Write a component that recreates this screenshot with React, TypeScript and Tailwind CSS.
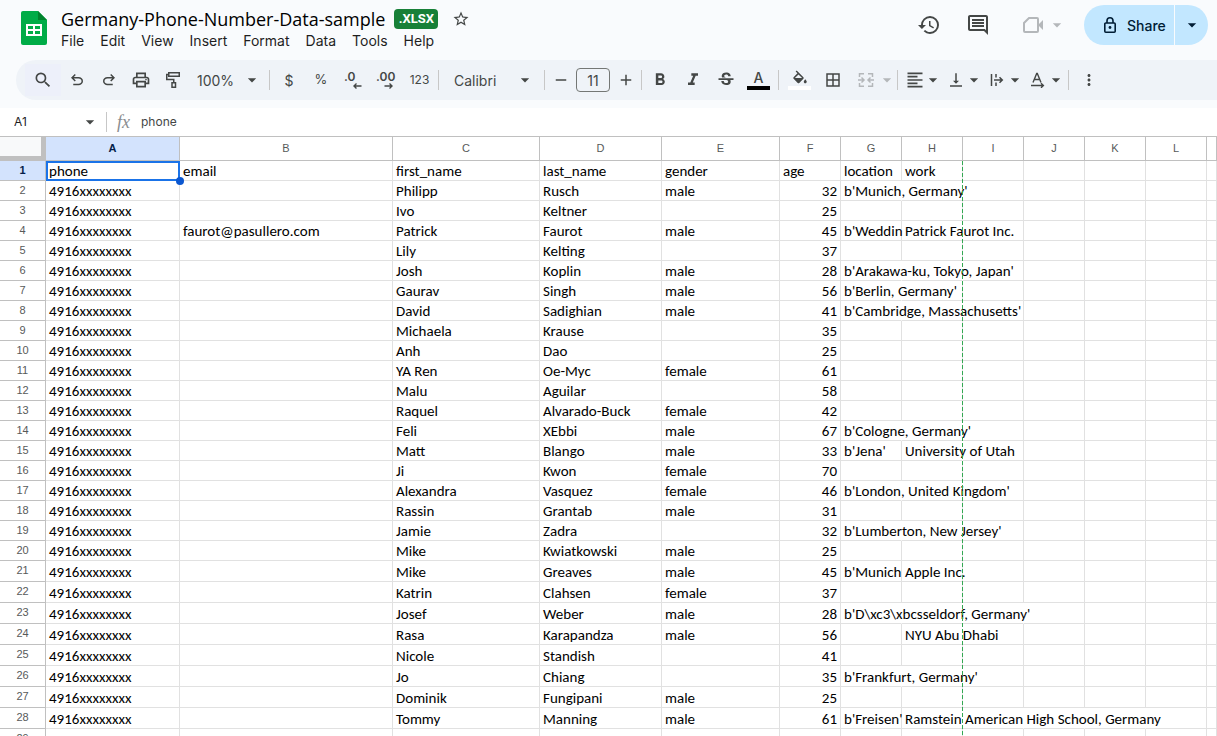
import { useState } from "react";
import { clsx } from "clsx";
import {
  MdAdd,
  MdArrowDropDown,
  MdBorderAll,
  MdFormatAlignLeft,
  MdFormatBold,
  MdFormatItalic,
  MdHistory,
  MdMoreVert,
  MdOutlineComment,
  MdOutlinePrint,
  MdRemove,
  MdSearch,
  MdStarBorder,
  MdStrikethroughS,
  MdVerticalAlignBottom,
} from "react-icons/md";

const menus = ["File", "Edit", "View", "Insert", "Format", "Data", "Tools", "Help"];

const columns = [
  { letter: "A", width: "w-[134px]" },
  { letter: "B", width: "w-[213px]" },
  { letter: "C", width: "w-[147px]" },
  { letter: "D", width: "w-[122px]" },
  { letter: "E", width: "w-[118px]" },
  { letter: "F", width: "w-[61px]" },
  { letter: "G", width: "w-[61px]" },
  { letter: "H", width: "w-[61px]" },
  { letter: "I", width: "w-[61px]" },
  { letter: "J", width: "w-[61px]" },
  { letter: "K", width: "w-[61px]" },
  { letter: "L", width: "w-[61px]" },
  { letter: "", width: "w-auto" },
];

const AGE = 5;
const LOCATION = 6;
const WORK = 7;

type Person = {
  email?: string;
  first: string;
  last: string;
  gender?: string;
  age: string;
  location?: string;
  work?: string;
  // index of the last column that a long value runs over
  spillTo?: number;
};

const people: Person[] = [
  { first: "Philipp", last: "Rusch", gender: "male", age: "32", location: "b'Munich, Germany'", spillTo: 8 },
  { first: "Ivo", last: "Keltner", age: "25" },
  { email: "faurot@pasullero.com", first: "Patrick", last: "Faurot", gender: "male", age: "45", location: "b'Weddin", work: "Patrick Faurot Inc.", spillTo: 8 },
  { first: "Lily", last: "Kelting", age: "37" },
  { first: "Josh", last: "Koplin", gender: "male", age: "28", location: "b'Arakawa-ku, Tokyo, Japan'", spillTo: 8 },
  { first: "Gaurav", last: "Singh", gender: "male", age: "56", location: "b'Berlin, Germany'", spillTo: 7 },
  { first: "David", last: "Sadighian", gender: "male", age: "41", location: "b'Cambridge, Massachusetts'", spillTo: 8 },
  { first: "Michaela", last: "Krause", age: "35" },
  { first: "Anh", last: "Dao", age: "25" },
  { first: "YA Ren", last: "Oe-Myc", gender: "female", age: "61" },
  { first: "Malu", last: "Aguilar", age: "58" },
  { first: "Raquel", last: "Alvarado-Buck", gender: "female", age: "42" },
  { first: "Feli", last: "XEbbi", gender: "male", age: "67", location: "b'Cologne, Germany'", spillTo: 8 },
  { first: "Matt", last: "Blango", gender: "male", age: "33", location: "b'Jena'", work: "University of Utah", spillTo: 8 },
  { first: "Ji", last: "Kwon", gender: "female", age: "70" },
  { first: "Alexandra", last: "Vasquez", gender: "female", age: "46", location: "b'London, United Kingdom'", spillTo: 8 },
  { first: "Rassin", last: "Grantab", gender: "male", age: "31" },
  { first: "Jamie", last: "Zadra", age: "32", location: "b'Lumberton, New Jersey'", spillTo: 8 },
  { first: "Mike", last: "Kwiatkowski", gender: "male", age: "25" },
  { first: "Mike", last: "Greaves", gender: "male", age: "45", location: "b'Munich", work: "Apple Inc.", spillTo: 7 },
  { first: "Katrin", last: "Clahsen", gender: "female", age: "37" },
  { first: "Josef", last: "Weber", gender: "male", age: "28", location: "b'D\\xc3\\xbcsseldorf, Germany'", spillTo: 9 },
  { first: "Rasa", last: "Karapandza", gender: "male", age: "56", work: "NYU Abu Dhabi", spillTo: 8 },
  { first: "Nicole", last: "Standish", age: "41" },
  { first: "Jo", last: "Chiang", age: "35", location: "b'Frankfurt, Germany'", spillTo: 8 },
  { first: "Dominik", last: "Fungipani", gender: "male", age: "25" },
  { first: "Tommy", last: "Manning", gender: "male", age: "61", location: "b'Freisen'", work: "Ramstein American High School, Germany", spillTo: 11 },
];

function SheetsLogo() {
  return (
    <svg width="26" height="34" viewBox="0 0 26 34" aria-hidden="true">
      <path d="M2 0h15l9 9v23a2 2 0 0 1-2 2H2a2 2 0 0 1-2-2V2a2 2 0 0 1 2-2z" fill="#00ac47" />
      <path d="M17 0l9 9h-9z" fill="#00832d" />
      <path d="M5 13h16v12H5zM7 15v3h5v-3zM14 15v3h5v-3zM7 20v3h5v-3zM14 20v3h5v-3z" fill="#fff" fillRule="evenodd" />
    </svg>
  );
}

function UndoIcon({ flip }: { flip?: boolean }) {
  return (
    <svg width="18" height="18" viewBox="0 -960 960 960" fill="currentColor" className={flip ? "-scale-x-100" : ""} aria-hidden="true">
      <path d="M280-200v-80h284q63 0 109.500-40T720-420q0-60-46.500-100T564-560H312l104 104-56 56-200-200 200-200 56 56-104 104h252q97 0 169.500 63T800-420q0 94-72.500 157T564-200H280Z" />
    </svg>
  );
}

function PaintFormatIcon() {
  return (
    <svg width="16" height="18" viewBox="0 0 16 18" fill="none" stroke="currentColor" strokeWidth="1.5" aria-hidden="true">
      <path d="M3.750 1.750h10.500v3.500H3.750zM3.750 3.500h-2v5h7v3M7 11.750h3.500v4.500H7z" />
    </svg>
  );
}

function FillIcon() {
  return (
    <svg width="18" height="16" viewBox="0 0 24 20" fill="currentColor" aria-hidden="true">
      <path d="M16.560 8.940L7.620 0 6.210 1.410l2.380 2.380-5.150 5.150c-.59.59-.59 1.540 0 2.120l5.500 5.500c.29.29.68.44 1.060.44s.77-.15 1.060-.44l5.500-5.500c.59-.58.59-1.530 0-2.120zM5.210 10L10 5.210 14.790 10H5.210zM19 11.500s-2 2.170-2 3.500c0 1.100.9 2 2 2s2-.9 2-2c0-1.330-2-3.500-2-3.500z" />
    </svg>
  );
}

function MergeIcon() {
  return (
    <svg width="16" height="16" viewBox="0 0 16 16" fill="none" stroke="currentColor" strokeWidth="1.500" aria-hidden="true">
      <path d="M1.500 5V1.750h4.500M10 1.750h4.500V5M1.500 11v3.250h4.500M10 14.250h4.500V11M0 8h5M3.500 5.500L6 8l-2.500 2.500M16 8h-5M12.500 5.500L10 8l2.500 2.500" />
    </svg>
  );
}

function WrapIcon() {
  return (
    <svg width="14" height="14" viewBox="0 0 14 14" fill="none" stroke="currentColor" strokeWidth="1.500" aria-hidden="true">
      <path d="M1.500 1v12M6 1v3.500M6 9.500V13M4 7h8M9.500 4.200L12.300 7 9.500 9.800" />
    </svg>
  );
}

function RotateIcon() {
  return (
    <svg width="16" height="16" viewBox="0 0 16 16" fill="none" stroke="currentColor" strokeWidth="1.400" aria-hidden="true">
      <path d="M3 10.500L6.700 1.500h.6L11 10.500M4.300 7.500h5.400M1 13.500h12M11 11.200l2.400 2.300-2.400 2.300" />
    </svg>
  );
}

function MeetIcon() {
  return (
    <svg width="20" height="16" viewBox="0 0 20 16" aria-hidden="true">
      <path d="M6 1h8a1 1 0 0 1 1 1v12a1 1 0 0 1-1 1H2a1 1 0 0 1-1-1V6z" fill="none" stroke="currentColor" strokeWidth="2" />
      <path d="M15 8l5-5v10z" fill="currentColor" />
    </svg>
  );
}

function LockIcon() {
  return (
    <svg width="12" height="16" viewBox="0 0 12 16" fill="none" stroke="currentColor" strokeWidth="1.600" aria-hidden="true">
      <path d="M1.800 6h8.400a1 1 0 0 1 1 1v7.200a1 1 0 0 1-1 1H1.800a1 1 0 0 1-1-1V7a1 1 0 0 1 1-1zM3 6V3.800a3 3 0 0 1 6 0V6" />
      <circle cx="6" cy="10.500" r="1.400" fill="currentColor" stroke="none" />
    </svg>
  );
}

function Divider({ className }: { className?: string }) {
  return <div className={clsx("h-5 w-px shrink-0 bg-[#c7c7c7]", className)} />;
}

type ToolProps = { label: string; className?: string; children: React.ReactNode };

function Tool({ label, className = "w-8 justify-center", children }: ToolProps) {
  return (
    <button type="button" aria-label={label} className={clsx("flex h-8 shrink-0 items-center", className)}>
      {children}
    </button>
  );
}

function DropdownTool({ label, className = "w-[41px] pl-[3px]", children }: ToolProps) {
  return (
    <Tool label={label} className={className}>
      <span className="flex w-4 shrink-0 justify-center">{children}</span>
      <MdArrowDropDown size={20} className="shrink-0" />
    </Tool>
  );
}

function DecimalTool({ label, text, arrow }: { label: string; text: string; arrow: string }) {
  return (
    <Tool label={label} className="w-8 flex-col justify-center">
      <span className="w-[18px] text-left text-[12px] font-semibold leading-3">{text}</span>
      <svg width="18" height="6" viewBox="-8 0 18 6" fill="none" stroke="currentColor" strokeWidth="1.400" aria-hidden="true">
        <path d={arrow} />
      </svg>
    </Tool>
  );
}

function Header() {
  return (
    <header className="flex h-[60px] items-start pl-[21px] pr-[9px]">
      <div className="pt-[11px]">
        <SheetsLogo />
      </div>
      <div className="ml-[14px] pt-[7px]">
        <div className="flex h-6 items-center">
          <h1 className="whitespace-nowrap font-['Open_Sans',sans-serif] text-[18px] leading-6 text-black">
            Germany-Phone-Number-Data-sample
          </h1>
          <span className="ml-[9px] flex h-5 w-11 items-center justify-center rounded bg-[#188038] font-['Roboto',sans-serif] text-[13px] font-bold text-white">
            .XLSX
          </span>
          <button type="button" aria-label="Star" className="ml-[14px] text-[#444746]">
            <MdStarBorder size={18} />
          </button>
        </div>
        <nav className="flex h-5 gap-4 text-[14px] leading-5 text-[#1f1f1f]">
          {menus.map((menu) => (
            <button key={menu} type="button">
              {menu}
            </button>
          ))}
        </nav>
      </div>
      <div className="ml-auto flex items-center pt-[5px] text-[#444746]">
        <button type="button" aria-label="Version history">
          <MdHistory size={24} />
        </button>
        <button type="button" aria-label="Comments" className="ml-[25px]">
          <MdOutlineComment size={24} />
        </button>
        <button type="button" aria-label="Join a call" className="ml-[33px] flex items-center gap-1 text-[#b4b7ba]">
          <MeetIcon />
          <MdArrowDropDown size={20} />
        </button>
        <div className="ml-[17px] flex h-10 gap-px text-[#001d35]">
          <button
            type="button"
            className="flex w-[90px] items-center gap-[11px] rounded-l-full bg-[#c2e7ff] pl-5 text-[14px] font-medium"
          >
            <LockIcon />
            Share
          </button>
          <button type="button" aria-label="Share options" className="flex w-[33px] items-center justify-center rounded-r-full bg-[#c2e7ff]">
            <MdArrowDropDown size={20} />
          </button>
        </div>
      </div>
    </header>
  );
}

function Toolbar() {
  const [fontSize, setFontSize] = useState(11);

  return (
    <div className="ml-4 flex h-10 items-center overflow-hidden rounded-l-full bg-[#eff3f8] pl-[9px] text-[#444746]">
      <Tool label="Search the menus" className="w-9 justify-center bg-[#edf0fa]">
        <MdSearch size={20} />
      </Tool>
      <Tool label="Undo">
        <UndoIcon />
      </Tool>
      <Tool label="Redo">
        <UndoIcon flip />
      </Tool>
      <Tool label="Print">
        <MdOutlinePrint size={20} />
      </Tool>
      <Tool label="Paint format">
        <PaintFormatIcon />
      </Tool>
      <Tool label="Zoom" className="w-20 justify-between pl-2 pr-[7px] text-[14px]">
        100%
        <MdArrowDropDown size={20} />
      </Tool>
      <Divider />
      <Tool label="Format as currency" className="ml-[3px] w-8 justify-center text-[14px]">
        $
      </Tool>
      <Tool label="Format as percent" className="w-8 justify-center text-[13px]">
        %
      </Tool>
      <DecimalTool label="Decrease decimal places" text=".0" arrow="M9.500 3H2M4.500 .5L2 3l2.500 2.500" />
      <DecimalTool label="Increase decimal places" text=".00" arrow="M.5 3H8M5.500 .5L8 3 5.500 5.500" />
      <Tool label="More formats" className="w-[37px] justify-center text-[12px]">
        123
      </Tool>
      <Divider />
      <Tool label="Font" className="w-[105px] justify-between pl-[15px] pr-[9px] text-[14px]">
        Calibri
        <MdArrowDropDown size={20} />
      </Tool>
      <Divider />
      <button type="button" aria-label="Decrease font size" onClick={() => setFontSize(fontSize - 1)} className="flex w-[31px] shrink-0 justify-center">
        <MdRemove size={18} />
      </button>
      <input
        aria-label="Font size"
        value={fontSize}
        onChange={(event) => setFontSize(Number(event.target.value))}
        className="h-6 w-[34px] shrink-0 rounded border border-[#747775] bg-transparent text-center text-[14px]"
      />
      <button type="button" aria-label="Increase font size" onClick={() => setFontSize(fontSize + 1)} className="flex w-[31px] shrink-0 justify-center">
        <MdAdd size={18} />
      </button>
      <Divider />
      <Tool label="Bold" className="ml-px w-[33px] justify-center">
        <MdFormatBold size={20} />
      </Tool>
      <Tool label="Italic" className="w-[33px] justify-center">
        <MdFormatItalic size={20} />
      </Tool>
      <Tool label="Strikethrough" className="w-[33px] justify-center">
        <MdStrikethroughS size={20} />
      </Tool>
      <Tool label="Text color" className="w-[33px] flex-col justify-center">
        <span className="text-[14px] font-medium leading-4">A</span>
        <span className="h-1 w-[23px] bg-black" />
      </Tool>
      <Divider className="ml-[3px]" />
      <Tool label="Fill color" className="ml-1 w-[33px] flex-col justify-center">
        <FillIcon />
        <span className="h-1 w-[23px] bg-white" />
      </Tool>
      <Tool label="Borders" className="w-[33px] justify-center">
        <MdBorderAll size={18} />
      </Tool>
      <DropdownTool label="Merge cells" className="w-12 gap-[3px] pl-[9px] text-[#b4b7ba]">
        <MergeIcon />
      </DropdownTool>
      <Divider className="mr-1.5" />
      <DropdownTool label="Horizontal align">
        <MdFormatAlignLeft size={20} className="shrink-0" />
      </DropdownTool>
      <DropdownTool label="Vertical align">
        <MdVerticalAlignBottom size={18} className="shrink-0" />
      </DropdownTool>
      <DropdownTool label="Text wrapping">
        <WrapIcon />
      </DropdownTool>
      <DropdownTool label="Text rotation">
        <RotateIcon />
      </DropdownTool>
      <Divider className="mr-1" />
      <Tool label="More">
        <MdMoreVert size={18} />
      </Tool>
    </div>
  );
}

function FormulaBar() {
  const [value, setValue] = useState("phone");

  return (
    <div className="mt-2 flex h-7 items-center bg-white text-[12px] text-[#1f1f1f]">
      <input aria-label="Name box" defaultValue="A1" className="w-20 pl-[14px]" />
      <button type="button" aria-label="Named ranges" className="mr-[6px] text-[#444746]">
        <MdArrowDropDown size={20} />
      </button>
      <Divider />
      <label htmlFor="formula" className="ml-[10px] w-6 font-['Liberation_Serif',serif] text-[18px] italic leading-5 text-[#8a8d90]">
        fx
      </label>
      <input
        id="formula"
        value={value}
        onChange={(event) => setValue(event.target.value)}
        className="min-w-0 flex-1 text-[#444746]"
      />
    </div>
  );
}

function RowHeader({ number, selected }: { number: number; selected?: boolean }) {
  return (
    <th
      scope="row"
      className={clsx(
        "border-b border-r border-[#c0c0c0] p-0 text-center align-top font-['Liberation_Sans',sans-serif] text-[11px] leading-[18px]",
        selected ? "bg-[#d3e3fd] font-bold text-[#041e49]" : "font-normal text-[#575a5a]"
      )}
    >
      {number}
    </th>
  );
}

function SheetRow({ number, cells, spillTo = 0 }: { number: number; cells: string[]; spillTo?: number }) {
  const lastFilled = cells[WORK] ? WORK : LOCATION;

  return (
    <tr className={number > 20 ? "h-[21px]" : "h-5"}>
      <RowHeader number={number} selected={number === 1} />
      {columns.map((column, i) => {
        const selected = number === 1 && i === 0;
        const hideLine = i >= lastFilled && i < spillTo;
        return (
          <td
            key={i}
            className={clsx(
              "whitespace-nowrap border-b border-r border-b-[#e1e1e1] px-[3px] py-0 align-bottom",
              hideLine ? "border-r-transparent" : "border-r-[#e1e1e1]",
              i === AGE && number > 1 && "text-right",
              selected && "relative"
            )}
          >
            {cells[i]}
            {selected && (
              <span className="absolute -bottom-px -right-px left-0 top-0 border-2 border-[#1a73e8]">
                <span className="absolute -bottom-[6px] -right-[6px] size-2 rounded-full bg-[#0b57d0]" />
              </span>
            )}
          </td>
        );
      })}
    </tr>
  );
}

function Sheet() {
  return (
    <main className="relative border-t border-[#c0c0c0] bg-white">
      <table className="w-full table-fixed border-separate border-spacing-0 font-['Calibri','Carlito','Lato',sans-serif] text-[15px] leading-[17px] text-black">
        <colgroup>
          <col className="w-[46px]" />
          {columns.map((column, i) => (
            <col key={i} className={column.width} />
          ))}
        </colgroup>
        <thead>
          <tr className="h-6 font-['Liberation_Sans',sans-serif] text-[11px] leading-4">
            <td className="border-b-[5px] border-r-[5px] border-[#c0c0c0] bg-[#f8f9fa] p-0" />
            {columns.map((column, i) => (
              <th
                key={i}
                scope="col"
                className={clsx(
                  "border-b border-r border-[#c0c0c0] px-0 pb-0.5 pt-0 text-center",
                  i === 0 ? "bg-[#d3e3fd] font-bold text-[#041e49]" : "font-normal text-[#575a5a]"
                )}
              >
                {column.letter}
              </th>
            ))}
          </tr>
        </thead>
        <tbody>
          <SheetRow number={1} cells={["phone", "email", "first_name", "last_name", "gender", "age", "location", "work"]} />
          {people.map((p, i) => (
            <SheetRow
              key={i}
              number={i + 2}
              cells={["4916xxxxxxxx", p.email ?? "", p.first, p.last, p.gender ?? "", p.age, p.location ?? "", p.work ?? ""]}
              spillTo={p.spillTo}
            />
          ))}
          <SheetRow number={29} cells={[]} />
        </tbody>
      </table>
      {/* page break guide */}
      <div className="absolute bottom-0 left-[962px] top-6 w-px bg-[repeating-linear-gradient(to_bottom,#34a853_0px,#34a853_4px,transparent_4px,transparent_6px)]" />
    </main>
  );
}

export default function App() {
  return (
    <div className="h-screen overflow-hidden bg-[#f9fbfd] font-['Inter','Liberation_Sans',sans-serif]">
      <Header />
      <Toolbar />
      <FormulaBar />
      <Sheet />
    </div>
  );
}
